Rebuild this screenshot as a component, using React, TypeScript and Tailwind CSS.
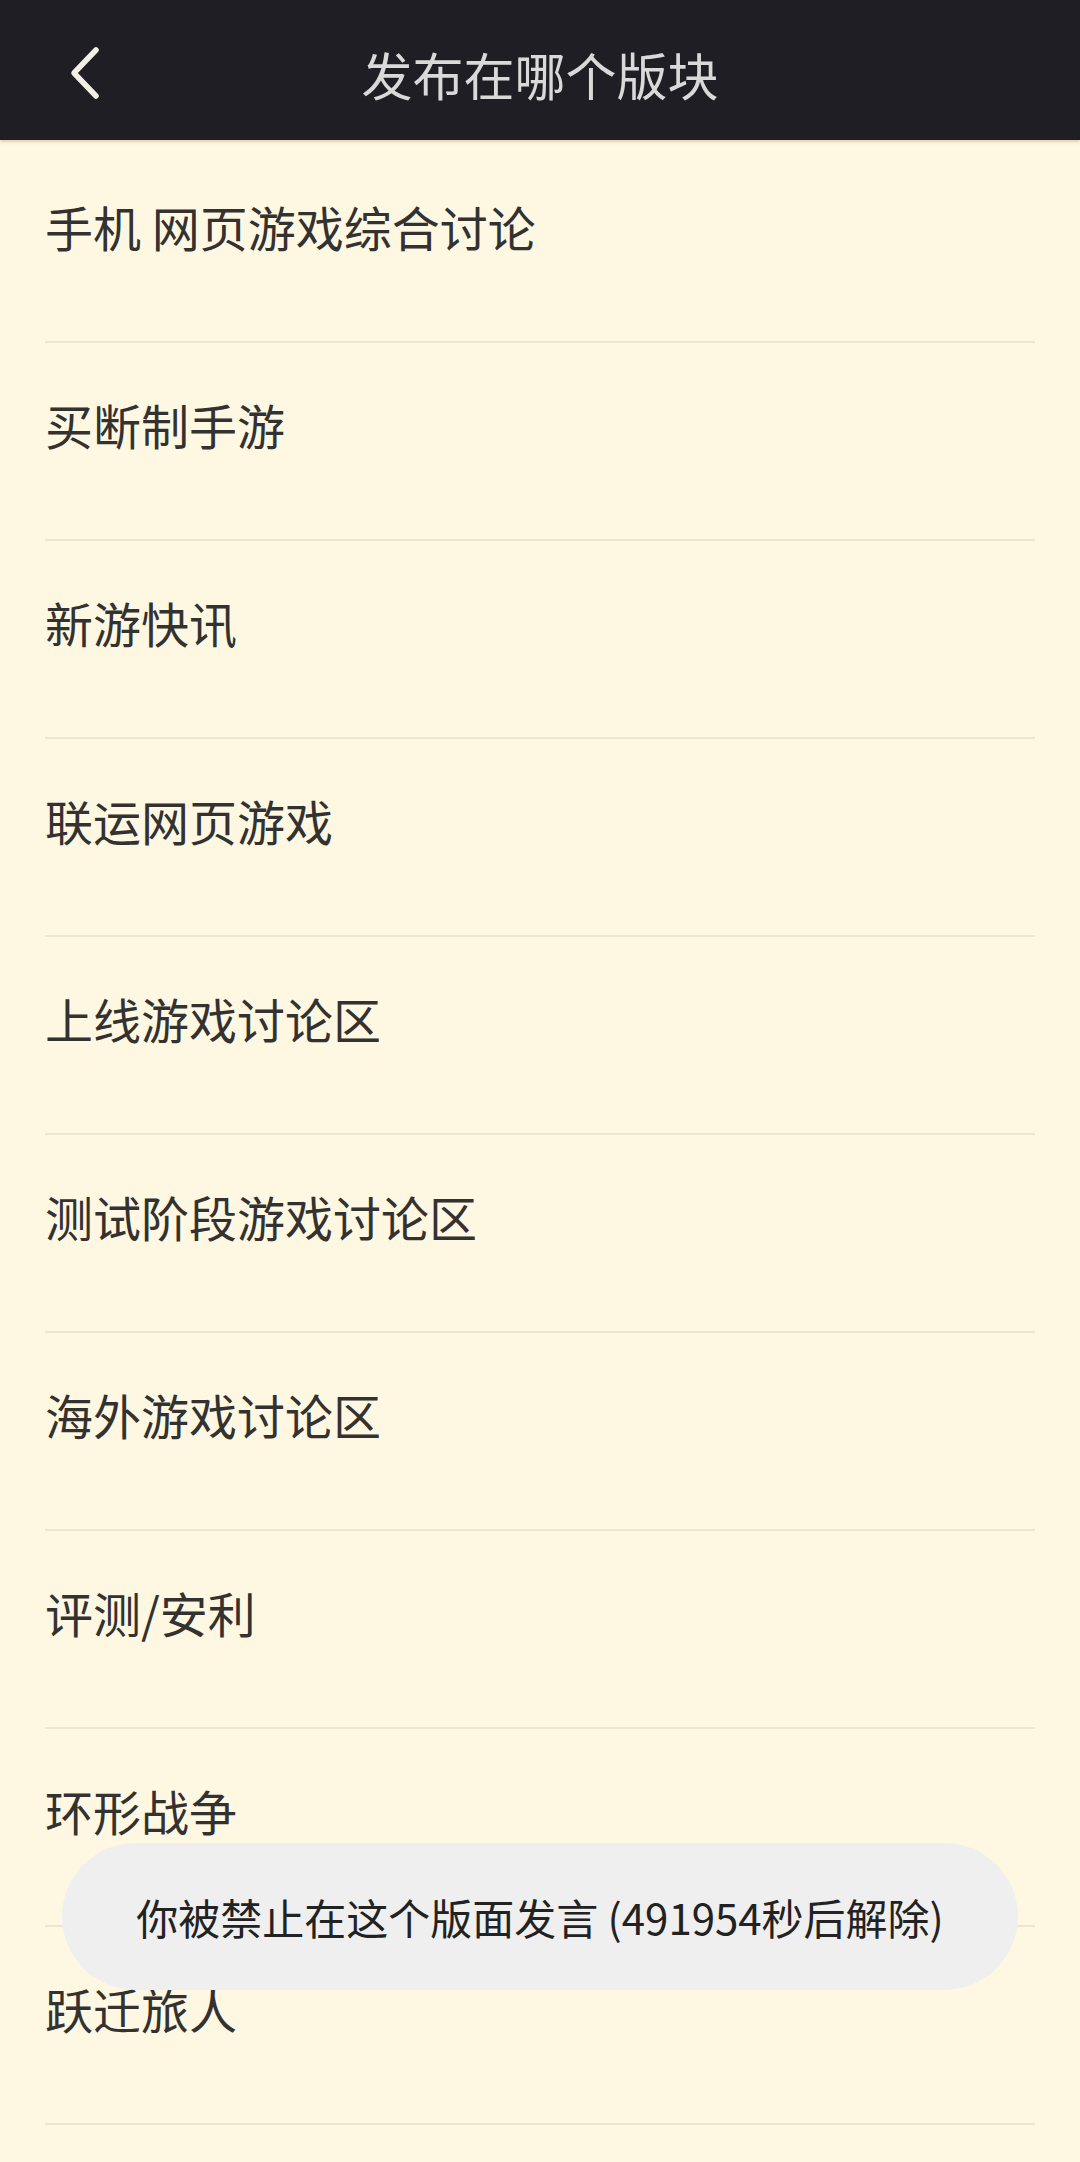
import React from 'react';

const boards = [
  '手机 网页游戏综合讨论',
  '买断制手游',
  '新游快讯',
  '联运网页游戏',
  '上线游戏讨论区',
  '测试阶段游戏讨论区',
  '海外游戏讨论区',
  '评测/安利',
  '环形战争',
  '跃迁旅人',
];

const font = { fontFamily: '"Noto Sans CJK SC", "Noto Sans", sans-serif' };

export default function App() {
  return (
    <div className="relative min-h-[2162px] h-[2162px] overflow-hidden bg-[#fef8e3]" style={font}>
      {/* top bar */}
      <div className="relative h-[140px] bg-[#1e1e24] flex items-center justify-center shadow-[0_2px_3px_rgba(120,100,60,0.25)]">
        <button className="absolute left-[52px] top-[34px] w-[64px] h-[78px] flex items-center justify-center">
          <svg width="40" height="58" viewBox="0 0 40 58" fill="none">
            <polyline points="32,6 10,29 32,52" stroke="#f3efe4" strokeWidth="5.5" strokeLinecap="round" strokeLinejoin="round" />
          </svg>
        </button>
        <h1 className="text-[51px] leading-[60px] text-[#d9d9d9] mt-[8px]">发布在哪个版块</h1>
      </div>

      {/* board list */}
      <div className="pt-[5px] px-[45px]">
        {boards.map((b) => (
          <div key={b} className="h-[198px] border-b-2 border-[#ede6d3] pt-[51px]">
            <div className="text-[48px] leading-[60px] text-[#333230] whitespace-pre">{b}</div>
          </div>
        ))}
      </div>

      {/* toast */}
      <div className="absolute left-[62px] right-[62px] top-[1843px] h-[147px] rounded-full bg-[#efefef] flex items-center justify-center">
        <span className="text-[42px] leading-[50px] text-[#222222]">你被禁止在这个版面发言 (491954秒后解除)</span>
      </div>
    </div>
  );
}
